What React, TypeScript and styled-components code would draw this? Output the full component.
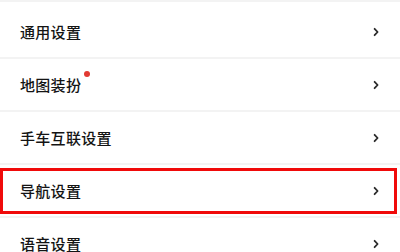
import React from "react";
import styled, { createGlobalStyle } from "styled-components";

const GlobalStyle = createGlobalStyle`
  html, body {
    margin: 0;
    padding: 0;
    background: #ffffff;
  }
  body {
    width: 400px;
    height: 252px;
    overflow: hidden;
    font-family: "Noto Sans CJK SC", "Noto Sans", sans-serif;
  }
`;

const items = [
  { name: "通用设置" },
  { name: "地图装扮", dot: true },
  { name: "手车互联设置" },
  { name: "导航设置", marked: true },
  { name: "语音设置" },
];

function Chevron() {
  return (
    <svg width="8" height="10" viewBox="0 0 8 10">
      <path
        d="M2.6 1.8 L5.6 5 L2.6 8.2"
        fill="none"
        stroke="#2a2a2a"
        strokeWidth="1.8"
        strokeLinecap="round"
        strokeLinejoin="round"
      />
    </svg>
  );
}

function App() {
  return (
    <Main>
      <GlobalStyle />
      <TopEdge />
      <List>
        {items.map((item) => (
          <Row key={item.name}>
            <Label>
              {item.name}
              {item.dot && <Dot />}
            </Label>
            <Chevron />
            {item.marked && <Highlight />}
          </Row>
        ))}
      </List>
    </Main>
  );
}

const Main = styled.main`
  display: flex;
  flex-direction: column;
  width: 400px;
  height: 252px;
  overflow: hidden;
  background: #fff;
`;

const TopEdge = styled.div`
  height: 1px;
  border-bottom: 2px solid #f3f3f3;
  margin-bottom: 4px;
`;

const List = styled.div`
  display: flex;
  flex-direction: column;
`;

const Row = styled.div`
  position: relative;
  display: flex;
  align-items: center;
  justify-content: space-between;
  height: 51px;
  padding: 0 20px 0 20px;
  border-bottom: 2px solid #f3f3f3;
  flex-shrink: 0;
`;

const Label = styled.span`
  position: relative;
  font-size: 15px;
  font-weight: 500;
  color: #141414;
  letter-spacing: 0.3px;
`;

const Dot = styled.span`
  position: absolute;
  top: -3px;
  right: -9px;
  width: 6px;
  height: 6px;
  border-radius: 50%;
  background: #e23a32;
`;

const Highlight = styled.div`
  position: absolute;
  left: 0;
  right: 3px;
  top: 3px;
  bottom: 2px;
  border: 3px solid #f00a0a;
  pointer-events: none;
`;

export default App;
